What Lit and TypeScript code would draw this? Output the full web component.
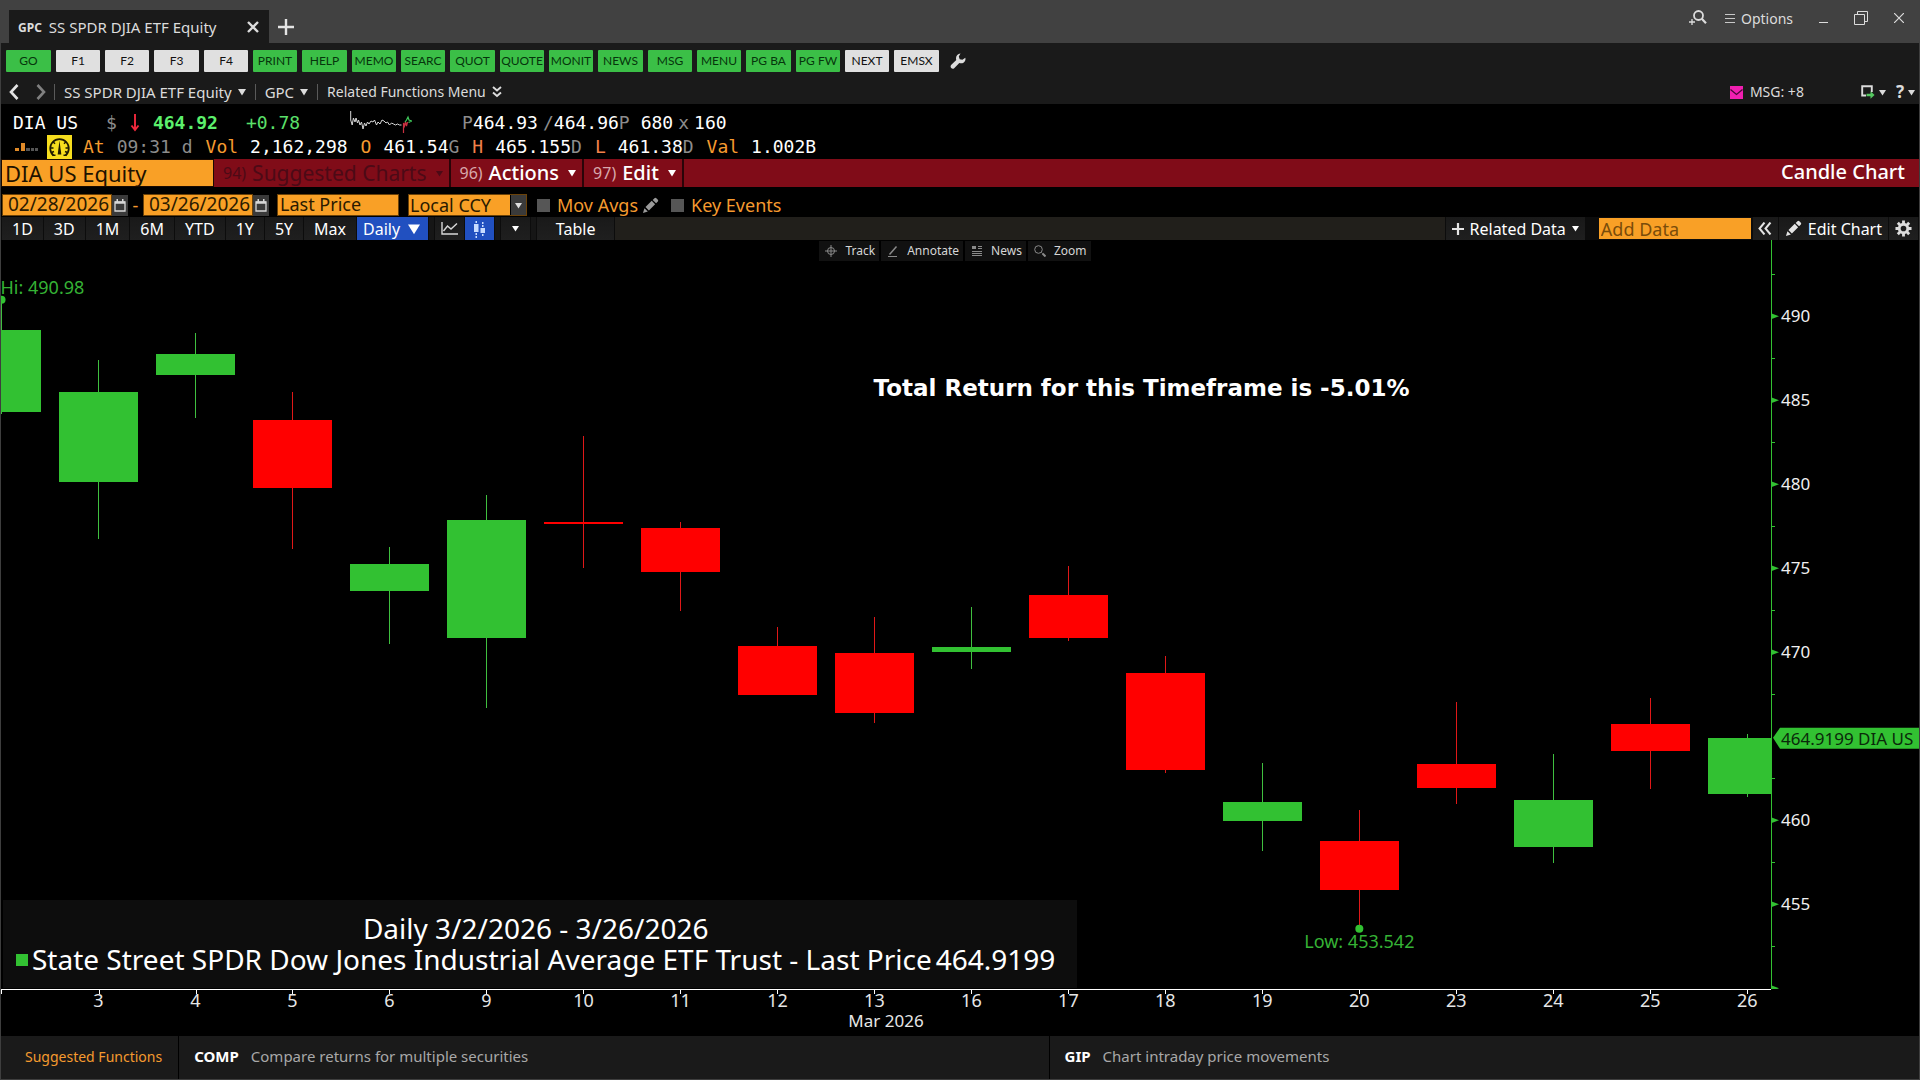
import { LitElement, html, css, svg, nothing } from 'lit';
import { customElement } from 'lit/decorators.js';
import { classMap } from 'lit/directives/class-map.js';

interface Candle {
  day: number;
  high: number;
  top: number;
  bottom: number;
  low: number;
  up: boolean;
}

const candle = (day: number, high: number, top: number, bottom: number, low: number, up: boolean): Candle => ({
  day, high, top, bottom, low, up,
});

const CANDLES: Candle[] = [
  candle(2, 490.98, 489.18, 484.3, 484.18, true),
  candle(3, 487.4, 485.49, 480.14, 476.74, true),
  candle(4, 489.01, 487.76, 486.51, 483.95, true),
  candle(5, 485.49, 483.83, 479.78, 476.15, false),
  candle(6, 476.27, 475.26, 473.65, 470.49, true),
  candle(9, 479.36, 477.88, 470.85, 466.68, true),
  candle(10, 482.88, 477.78, 477.64, 475.02, false),
  candle(11, 477.76, 477.4, 474.78, 472.46, false),
  candle(12, 471.51, 470.38, 467.46, 467.46, false),
  candle(13, 472.1, 469.96, 466.39, 465.79, false),
  candle(16, 472.7, 470.32, 470.02, 469.01, true),
  candle(17, 475.14, 473.41, 470.85, 470.67, false),
  candle(18, 469.78, 468.77, 462.99, 462.82, false),
  candle(19, 463.41, 461.09, 459.96, 458.17, true),
  candle(20, 460.61, 458.77, 455.85, 453.542, false),
  candle(23, 467.04, 463.35, 461.92, 460.97, false),
  candle(24, 463.95, 461.21, 458.41, 457.46, true),
  candle(25, 467.28, 465.73, 464.13, 461.86, false),
  candle(26, 465.155, 464.92, 461.54, 461.38, true),
];

const PRICE_TOP = 494.54;
const PRICE_BOTTOM = 449.96;
const STEP = 100 / 18.25;
const BODY = 4.46;

const yOf = (price: number) => ((PRICE_TOP - price) / (PRICE_TOP - PRICE_BOTTOM)) * 100;
const xOf = (index: number) => index * STEP + 0.03;
const pct = (n: number) => `${n.toFixed(3)}%`;

const caret = (size = 8) => html`<svg class="icon" width=${size} height=${size} viewBox="0 0 8 8"><path d="M0 1h8L4 7.5z" fill="currentColor"/></svg>`;

const pencil = (size: number, color: string) => html`<svg class="icon" width=${size} height=${size} viewBox="0 0 18 18">
  <path d="M1 17l1.600-5.200 3.600 3.600zM3.700 10.700l6.600-6.600 3.600 3.600-6.600 6.600zM11.300 3.100l1.900-1.900q1-.8 2 .1l1.600 1.600q.8 1 0 1.900l-1.900 1.900z" fill=${color}/></svg>`;

const calendar = html`<svg class="icon" width="12" height="13" viewBox="0 0 12 13">
  <path d="M1 3h10v9H1z" fill="none" stroke="#d8d8d8" stroke-width="1.300"/><path d="M1 2.500h10v2.300H1zM2.500 0h1.500v3H2.500zM8 0h1.500v3H8z" fill="#d8d8d8"/></svg>`;

const FUNCTION_KEYS: [string, string][] = [
  ['GO', 'green'], ['F1', 'white'], ['F2', 'white'], ['F3', 'white'], ['F4', 'white'],
  ['PRINT', 'green'], ['HELP', 'green'], ['MEMO', 'green'], ['SEARC', 'green'], ['QUOT', 'green'],
  ['QUOTE', 'green'], ['MONIT', 'green'], ['NEWS', 'green'], ['MSG', 'green'], ['MENU', 'green'],
  ['PG BA', 'green'], ['PG FW', 'green'], ['NEXT', 'white'], ['EMSX', 'white'],
];

const RANGES = ['1D', '3D', '1M', '6M', 'YTD', '1Y', '5Y', 'Max'];

@customElement('candle-chart')
export class CandleChart extends LitElement {
  static styles = css`
    :host {
      display: grid;
      grid-template-columns: minmax(0, 1fr) 148px;
      grid-template-rows: minmax(400px, 1fr) 47px;
      position: relative;
      background: #000;
      font-family: "Noto Sans", "Open Sans", sans-serif;
      color: #fff;
    }
    svg { display: block; width: 100%; height: 100%; }
    .plot { position: relative; overflow: hidden; }
    .plot > svg { position: absolute; inset: 0; }
    .scale { position: relative; }
    .scale > svg { position: absolute; inset: 0; }
    .dates { border-top: 1px solid #fff; box-sizing: border-box; }
    .dates svg { overflow: visible; }
    .crisp { shape-rendering: crispEdges; }
    .up { fill: #32c132; }
    .down { fill: #ff0000; }
    .up-line { stroke: #3fbf3f; }
    .down-line { stroke: #e01818; }
    .mark { fill: #35b235; font-size: 18px; }
    .note { fill: #fff; font: bold 23px "DejaVu Sans", sans-serif; }
    .price { fill: #f0f0f0; font-size: 17px; }
    .day { fill: #e6e6e6; font-size: 18px; }
    .month { fill: #e6e6e6; font-size: 17px; }
    .tag { fill: #32c132; }
    .tag-text { fill: #0a2a0a; font-size: 17px; }
    .legend {
      position: absolute;
      left: 2px;
      bottom: 1px;
      padding: 13px 22px 13px 13px;
      background: #0d0d0d;
      font-size: 28px;
      line-height: 31px;
    }
    .legend-title { text-align: center; }
    .legend-row { display: flex; align-items: center; gap: 4px; white-space: nowrap; }
    .swatch { width: 12px; height: 12px; background: #32c132; }
    .tools {
      position: absolute;
      top: 1px;
      left: 0;
      right: 0;
      padding-right: 10px;
      display: flex;
      justify-content: center;
      gap: 2px;
    }
    .tool {
      display: flex;
      align-items: center;
      gap: 8px;
      height: 20px;
      padding: 0 4px 0 6px;
      border: 0;
      background: #111;
      color: #d6d6d6;
      font: 12px/20px "Noto Sans", sans-serif;
    }
    .tool svg { width: 12px; height: 12px; }
  `;

  private renderCandle(c: Candle, i: number) {
    const x = xOf(i);
    const tone = c.up ? 'up' : 'down';
    return svg`<g class="crisp">
      <line class="${tone}-line" x1=${pct(x)} x2=${pct(x)} y1=${pct(yOf(c.high))} y2=${pct(yOf(c.low))}/>
      <rect class=${tone} x=${pct(x - BODY / 2)} width=${pct(BODY)} y=${pct(yOf(c.top))} height=${pct(yOf(c.bottom) - yOf(c.top))}/>
    </g>`;
  }

  render() {
    const majors = [490, 485, 480, 475, 470, 465, 460, 455, 450];
    const minors = [492.5, 487.5, 482.5, 477.5, 472.5, 467.5, 462.5, 457.5, 452.5];
    const hi = CANDLES[0];
    const low = CANDLES[14];
    return html`
      <div class="plot">
        <svg role="img" aria-label="Daily candles for DIA US">
          ${CANDLES.map((c, i) => this.renderCandle(c, i))}
          <svg x=${pct(xOf(0))} y=${pct(yOf(hi.high))} overflow="visible">
            <circle class="up" r="4"/><text class="mark" x="-1" y="-6">Hi: 490.98</text>
          </svg>
          <svg x=${pct(xOf(14))} y=${pct(yOf(low.low))} overflow="visible">
            <circle class="up" r="4"/><text class="mark" y="19" text-anchor="middle">Low: 453.542</text>
          </svg>
          <text class="note" x="49.300%" y="20.800%">Total Return for this Timeframe is -5.01%</text>
        </svg>
        <div class="legend">
          <div class="legend-title">Daily 3/2/2026 - 3/26/2026</div>
          <div class="legend-row">
            <span class="swatch"></span>
            <span>State Street SPDR Dow Jones Industrial Average ETF Trust - Last Price</span>
            <span>464.9199</span>
          </div>
        </div>
      </div>
      <div class="scale">
        <svg>
          <rect class="up crisp" width="1" height="100%"/>
          ${minors.map((p) => svg`<rect class="up crisp" width="4" height="1" y=${pct(yOf(p))}/>`)}
          ${majors.map((p) => svg`<svg y=${pct(yOf(p))} overflow="visible">
            ${p === 465 ? nothing : svg`<path class="up" d="M0 -3L8 0L0 3z"/>`}
            ${p === 465 || p === 450 ? nothing : svg`<text class="price" x="10" y="6">${p}</text>`}
          </svg>`)}
          <svg y=${pct(yOf(464.9199))} overflow="visible">
            <path class="tag" d="M2 0L9 -10H148V11H9z"/>
            <text class="tag-text" x="10" y="7">464.9199 DIA US</text>
          </svg>
        </svg>
      </div>
      <div class="dates">
        <svg>
          <rect width="1" height="4" fill="#fff"/>
          ${CANDLES.slice(1).map((c, i) => svg`<svg x=${pct(xOf(i + 1))} overflow="visible">
            <rect class="crisp" width="1" height="4" fill="#fff"/>
            <text class="day" y="17" text-anchor="middle">${c.day}</text>
          </svg>`)}
          <text class="month" x="50%" y="37" text-anchor="middle">Mar 2026</text>
        </svg>
      </div>
      <div class="tools">
        <button class="tool"><svg viewBox="0 0 12 12" fill="none" stroke="#8a8a8a"><path d="M6 0v12M0 6h12"/><circle cx="6" cy="6" r="3.500"/></svg>Track</button>
        <button class="tool"><svg viewBox="0 0 12 12" fill="none" stroke="#8a8a8a"><path d="M2.500 9.500L9.500 1.500" stroke-width="1.500"/><path d="M1 11.500h9"/></svg>Annotate</button>
        <button class="tool"><svg viewBox="0 0 12 12" fill="none" stroke="#8a8a8a"><path d="M1 1.500h4M1 3.500h4M7 1.500h4M7 3.500h4M1 6.500h10M1 8.500h10M1 10.500h10"/><path d="M3 1v3" stroke-width="4"/></svg>News</button>
        <button class="tool"><svg viewBox="0 0 12 12" fill="none" stroke="#8a8a8a"><circle cx="4.500" cy="4.500" r="3.800"/><path d="M7.500 7.500l1 1"/><path d="M8.500 8.500l3 3" stroke-width="2"/></svg>Zoom</button>
      </div>
    `;
  }
}

@customElement('app-root')
export class AppRoot extends LitElement {
  static styles = css`
    :host { display: block; font-family: "Noto Sans", "Open Sans", sans-serif; }
    * { box-sizing: border-box; }
    button { border: 0; margin: 0; padding: 0; background: none; color: inherit; font: inherit; white-space: nowrap; }
    input, select { margin: 0; border: 0; border-radius: 0; outline: 0; font: inherit; }
    .icon { display: block; flex: none; }
    .page { display: flex; flex-direction: column; min-height: 100vh; background: #000; color: #dcdcdc; }

    .titlebar { display: flex; height: 43px; background: #414141; }
    .tab { display: flex; align-items: center; width: 260px; height: 33px; margin: 10px 0 0 9px; padding: 0 10px 0 9px; background: #1a1a1a; font-size: 15px; }
    .tab-code { font-size: 12px; font-weight: bold; margin-right: 7px; padding-top: 2px; }
    .tab-title { flex: 1; white-space: nowrap; }
    .new-tab { margin: 11px 0 0 9px; }
    .window { display: flex; align-items: center; height: 36px; margin-left: auto; padding-right: 16px; gap: 26px; font-size: 14px; }
    .window-options { display: flex; align-items: center; gap: 6px; }
    .window-tools { display: flex; align-items: center; gap: 18px; }

    .frame { flex: 1; display: flex; flex-direction: column; border: solid #3e3e3e; border-width: 0 1px 1px; }
    .keys { display: flex; align-items: center; gap: 5px; padding: 7px 5px 8px; background: #1a1a1a; }
    .key { width: 44px; height: 22px; border-radius: 1px; font: 12px/22px Lato, sans-serif; text-align: center; }
    .key:nth-child(3n + 1) { width: 45px; }
    .key.green { background: #3bbf47; color: #06350c; }
    .key.white { background: #e0e0e0; color: #111; }
    .wrench { margin-left: 6px; }

    .nav { display: flex; align-items: center; height: 24px; padding: 0 4px 0 8px; background: #1a1a1a; font-size: 15px; line-height: 24px; }
    .nav-arrows { display: flex; gap: 17px; padding-right: 8px; }
    .nav-item { display: flex; align-items: center; gap: 6px; height: 16px; padding: 0 9px; border-left: 1px solid #5a5a5a; }
    .nav-item.menu { font-size: 14px; }
    .nav-right { display: flex; align-items: center; margin-left: auto; gap: 10px; }
    .message { display: flex; align-items: center; gap: 7px; font-size: 14px; margin-right: 47px; }
    .drop { display: flex; align-items: center; gap: 4px; font-size: 17px; font-weight: bold; }

    .quote { padding: 7px 0 0 12px; font: 18px/24px "DejaVu Sans Mono", monospace; color: #fff; white-space: nowrap; }
    .quote-row { display: flex; align-items: center; height: 24px; }
    .dim { color: #8c8c8c; }
    .bright { color: #5cf06c; font-weight: bold; }
    .gain { color: #5be06b; }
    .g1 { margin-left: 5px; }
    .g2 { margin-left: 11px; }
    .g3 { margin-left: 28px; }
    .g4 { margin-left: 50px; }
    .stats { display: flex; gap: 13px; margin-left: 11px; }
    .stat { display: flex; gap: 12px; }
    .label { color: #f59a2f; }
    .label.hot { color: #f2814a; }

    .red { display: flex; align-items: stretch; height: 28px; background: #800c18; font-size: 21px; line-height: 28px; }
    .security { width: 213px; padding: 0 3px; border: 1px solid #1a0a00; background: #f9a026; color: #1e1200; font-size: 22px; }
    .menu-button { display: flex; align-items: center; gap: 6px; padding: 0 6px 0 9px; border-right: 2px solid #2a0408; color: #fff; font-size: 20px; font-weight: 500; line-height: 26px; }
    .menu-button .num { font-size: 16px; font-weight: 400; color: #d8a8ac; }
    .menu-button .icon { margin-left: 3px; }
    .menu-button.off { color: #4c0a16; font-size: 21px; font-weight: 400; }
    .menu-button.off .num { color: #4c0a16; }
    .heading { margin: 0 14px 0 auto; color: #fff; font-size: 20px; font-weight: 500; line-height: 26px; }

    .controls { display: flex; align-items: center; height: 30px; padding: 6px 0 0 1px; color: #f59a2f; font-size: 18px; }
    .field { height: 22px; padding: 0 2px 2px; border: 1px solid #6b4208; background: #f9a026; color: #2a1a00; font-size: 18px; line-height: 20px; }
    .field.date { width: 110px; padding-left: 5px; font-size: 19px; }
    .field.price { width: 122px; margin: 0 9px 0 8px; }
    .cal { display: flex; align-items: center; justify-content: center; width: 16px; height: 21px; background: #3a3a3a; }
    .dash { width: 15px; text-align: center; }
    .combo { display: grid; grid-template-columns: 102px 17px; color: #ddd; }
    .combo select { grid-area: 1 / 1 / 2 / 3; width: 119px; appearance: none; padding: 0 1px; background: linear-gradient(90deg, #f9a026 101px, #000 101px, #000 102px, #3a3a3a 102px); }
    .combo span { grid-area: 1 / 2; display: grid; place-items: center; pointer-events: none; }
    .check { display: flex; align-items: center; gap: 7px; margin-left: 10px; line-height: 22px; }
    .check input { appearance: none; width: 13px; height: 13px; background: #565656; }
    .pen { margin: 0 2px 0 4px; }

    .toolbar { display: flex; align-items: stretch; height: 23px; background: #211f1b; color: #fff; font-size: 16px; line-height: 22px; }
    .group { display: flex; gap: 1px; padding: 0 1px; background: #0c0c0c; }
    .tb { display: flex; align-items: center; justify-content: center; gap: 6px; padding: 0 10px; background: linear-gradient(#191919, #1f1f1f); }
    .tb.on { background: #2150c0; }
    .tb.daily { padding: 0 8px 0 6px; gap: 8px; }
    .tb.square { width: 29px; padding: 0; }
    .tb.narrow { width: 25px; padding: 0; }
    .tb.table { width: 77px; }
    .gap { width: 5px; background: #161616; }
    .related { margin-left: auto; }
    .tb.wide { padding: 0 6px; }
    .add { width: 152px; height: 21px; margin: 1px 1px 0 13px; padding: 0 2px; background: #f9a026; color: #2a1a00; font-size: 18px; }
    .add::placeholder { color: #7a4c0a; opacity: 1; }

    candle-chart { flex: 1; }

    .footer { display: grid; grid-template-columns: auto 1fr 1fr; gap: 1px; height: 43px; background: #000; font-size: 15px; line-height: 41px; color: #a8a8a8; }
    .cell { display: flex; gap: 12px; padding: 0 15px; background: #1a1a1a; }
    .cell a { color: inherit; text-decoration: none; }
    .cell.first { padding: 0 16px 0 24px; color: #f59a2f; font-size: 14px; }
    .cell b { color: #fff; }
  `;

  private renderTitleBar() {
    return html`<header class="titlebar">
      <div class="tab">
        <span class="tab-code">GPC</span><span class="tab-title">SS SPDR DJIA ETF Equity</span>
        <button aria-label="Close tab"><svg class="icon" width="12" height="12" viewBox="0 0 12 12"><path d="M1 1l10 10M11 1L1 11" stroke="#dcdcdc" stroke-width="2.400"/></svg></button>
      </div>
      <button class="new-tab" aria-label="New tab"><svg class="icon" width="16" height="16" viewBox="0 0 16 16"><path d="M8 0v16M0 8h16" stroke="#e4e4e4" stroke-width="2.400"/></svg></button>
      <div class="window">
        <div class="window-tools">
          <button aria-label="Search"><svg class="icon" width="19" height="18" viewBox="0 0 19 18" fill="none" stroke="#dcdcdc"><circle cx="10.500" cy="6.500" r="4.500" stroke-width="1.800"/><path d="M13.800 9.800l4.200 4.400" stroke-width="2.200"/><path d="M4 10v6M1 13h6" stroke-width="1.300"/></svg></button>
          <button class="window-options"><svg class="icon" width="10" height="11" viewBox="0 0 10 11"><path d="M0 1.500h10M0 5.500h10M0 9.500h10" stroke="#c8c8c8"/></svg>Options</button>
        </div>
        <button aria-label="Minimize"><svg class="icon" width="9" height="12" viewBox="0 0 9 12"><path d="M0 10.500h9" stroke="#dcdcdc"/></svg></button>
        <button aria-label="Restore"><svg class="icon" width="14" height="14" viewBox="0 0 14 14" fill="none" stroke="#dcdcdc"><path d="M.5 3.500h10v10H.5zM3.500 3.500V.5h10v10h-3"/></svg></button>
        <button aria-label="Close"><svg class="icon" width="10" height="10" viewBox="0 0 10 10"><path d="M0 0l10 10M10 0L0 10" stroke="#dcdcdc" stroke-width="1.200"/></svg></button>
      </div>
    </header>`;
  }

  private renderKeys() {
    return html`<div class="keys">
      ${FUNCTION_KEYS.map(([label, tone]) => html`<button class=${classMap({ key: true, [tone]: true })}>${label}</button>`)}
      <button class="wrench" aria-label="Settings"><svg class="icon" width="16" height="16" viewBox="0 0 16 16"><path d="M10.500 .6L8.800 3.600l.9 2.600 2.700.6 2.900-2.100Q16.100 8 13.500 9.700 11.700 10.800 9.300 10L4.200 15.200Q2.600 16.300 1.200 15 0 13.500 1.100 12L6.300 7Q5.400 4.200 7.200 2.100 8.700 .5 10.500 .6z" fill="#dcdcdc"/></svg></button>
    </div>`;
  }

  private renderNav() {
    return html`<nav class="nav">
      <div class="nav-arrows">
        <button aria-label="Back"><svg class="icon" width="10" height="16" viewBox="0 0 10 16"><path d="M8.500 1L2 8l6.500 7" fill="none" stroke="#e4e4e4" stroke-width="2.600"/></svg></button>
        <button aria-label="Forward"><svg class="icon" width="10" height="16" viewBox="0 0 10 16"><path d="M1.500 1L8 8l-6.500 7" fill="none" stroke="#808080" stroke-width="2.600"/></svg></button>
      </div>
      <button class="nav-item">SS SPDR DJIA ETF Equity ${caret()}</button>
      <button class="nav-item">GPC ${caret()}</button>
      <button class="nav-item menu">Related Functions Menu<svg class="icon" width="10" height="12" viewBox="0 0 10 12"><path d="M1 1l4 3.500L9 1M1 6.500L5 10l4-3.500" fill="none" stroke="#dcdcdc" stroke-width="1.900"/></svg></button>
      <div class="nav-right">
        <button class="message"><svg class="icon" width="13" height="13" viewBox="0 0 13 13"><path d="M0 0h13v13H0z" fill="#f01fb0"/><path d="M.5 3.500l6 5 6-5" fill="none" stroke="#4a0838" stroke-width="1.300"/></svg>MSG: +8</button>
        <button class="drop" aria-label="Export"><svg class="icon" width="14" height="14" viewBox="0 0 14 14"><path d="M5 10.500H1.200V1.200h9.600V7" fill="none" stroke="#dcdcdc" stroke-width="1.900"/><path d="M5.500 8.800h4V6.200L13.600 10l-4.100 3.700v-2.500h-4z" fill="#55c860"/></svg>${caret(7)}</button>
        <button class="drop">? ${caret(7)}</button>
      </div>
    </nav>`;
  }

  private stat(label: string, value: string, suffix = '', hot = false) {
    return html`<span class="stat"><span class=${classMap({ label: true, hot })}>${label}</span><span>${value}${suffix ? html`<span class="dim">${suffix}</span>` : nothing}</span></span>`;
  }

  private renderQuote() {
    return html`<section class="quote">
      <div class="quote-row"><span>DIA US</span><span class="dim g3">$</span><svg class="icon g2" width="14" height="20" viewBox="0 0 14 20"><path d="M7 1v15M3.500 12.500L7 17l3.500-4.500" fill="none" stroke="#f0283c" stroke-width="1.900"/></svg><span class="bright g2">464.92</span><span class="gain g3">+0.78</span><svg class="icon g4" width="62" height="24" viewBox="0 0 62 24" fill="none"><path d="M.7 0v9l1.500 5 1.200-7 1.600 4 1-4 1.500 5 1-3 1.500 5 1.500-3 1.500 7 1.500-6 1.500 3 1.500-4 1.500 2 2-3 2 1 1.500-2 2 5 1.500-3 2 2 2-4 2 1 2 2 1.500-1 2 3 2-2 2 1 2 1 2-1 2 1h2" stroke="#d8d8d8"/><path d="M53.500 22V12l1 3 1-4 1 4 1-4" stroke="#c83040" stroke-width="1.200"/><path d="M55 11l1.500-2 1.500-3 1 3 2.500 1-3 1.500" stroke="#3fc85a" stroke-width="1.200"/></svg><span class="g4"><span class="dim">P</span>464.93</span><span class="dim g1">/</span><span>464.96<span class="dim">P</span></span><span class="g2">680</span><span class="dim g1">x</span><span class="g1">160</span></div>
      <div class="quote-row"><svg class="icon" width="34" height="10" viewBox="-2 0 34 10"><path d="M0 6h4v3H0zM6 1h4v8H6z" fill="#e08a28"/><path d="M11 6h4v3h-4zM16 6h3v3h-3zM20 6h3v3h-3z" fill="#555"/></svg><svg class="icon" width="25" height="25" viewBox="0 0 25 25"><path d="M0 0h25v25H0z" fill="#f7de1e"/><path d="M6.500 20.500A9.300 9.300 0 1 1 18.500 20.500" fill="none" stroke="#1e1a00" stroke-width="1.700"/><path d="M12.500 5.500l1.800 14h-3.600z" fill="#1e1a00"/><path d="M3.500 13h3M18.500 13h3M6 6.800l2 2M19 6.800l-2 2M4.500 17.500l2.500-1M20.500 17.500l-2.500-1M5.500 20.300h3M16.500 20.300h3" stroke="#1e1a00" stroke-width="1.500"/></svg><div class="stats"><span class="stat"><span class="label">At</span><span class="dim">09:31 d</span></span>${this.stat('Vol', '2,162,298')}${this.stat('O', '461.54', 'G')}${this.stat('H', '465.155', 'D', true)}${this.stat('L', '461.38', 'D', true)}${this.stat('Val', '1.002B')}</div></div>
    </section>`;
  }

  private renderControls() {
    return html`
      <div class="red">
        <input class="security" aria-label="Security" value="DIA US Equity">
        <button class="menu-button off" disabled><span class="num">94)</span>Suggested Charts ${caret(7)}</button>
        <button class="menu-button"><span class="num">96)</span>Actions ${caret(8)}</button>
        <button class="menu-button"><span class="num">97)</span>Edit ${caret(8)}</button>
        <h1 class="heading">Candle Chart</h1>
      </div>
      <div class="controls">
        <input class="field date" aria-label="Start date" value="02/28/2026"><button class="cal" aria-label="Pick start date">${calendar}</button>
        <span class="dash">-</span>
        <input class="field date" aria-label="End date" value="03/26/2026"><button class="cal" aria-label="Pick end date">${calendar}</button>
        <input class="field price" aria-label="Price field" value="Last Price">
        <div class="combo"><select class="field" aria-label="Currency"><option>Local CCY</option></select><span>${caret(7)}</span></div>
        <label class="check"><input type="checkbox">Mov Avgs</label>
        <button class="pen" aria-label="Edit moving averages">${pencil(17, '#9a9a9a')}</button>
        <label class="check"><input type="checkbox">Key Events</label>
      </div>`;
  }

  private renderToolbar() {
    return html`<div class="toolbar">
      <div class="group">
        ${RANGES.map((r) => html`<button class="tb">${r}</button>`)}
        <button class="tb on daily">Daily ${caret(12)}</button>
        <span class="gap"></span>
        <button class="tb square" aria-label="Line chart"><svg class="icon" width="17" height="13" viewBox="0 0 17 13" fill="none" stroke="#d8d8d8" stroke-width="1.400"><path d="M1 0v12h16M2.500 9L6.500 4l3.500 3L16 1.500"/></svg></button>
        <button class="tb square on" aria-label="Candle chart"><svg class="icon" width="13" height="18" viewBox="0 0 13 18" fill="#c8dcff"><path d="M2.500 1h1.500v2H2.500zM1 4h4.500v8H1zM2.500 13h1.500v2H2.500zM2.500 16h1.500v2H2.500zM9 2h1.500v2H9zM9 5h1.500v2H9zM7.500 8H12v5H7.500zM9 14h1.500v2H9z"/></svg></button>
        <span class="gap"></span>
        <button class="tb square" aria-label="More chart types">${caret(7)}</button>
        <span class="gap"></span>
        <button class="tb table">Table</button>
      </div>
      <div class="group related">
        <button class="tb wide"><svg class="icon" width="12" height="12" viewBox="0 0 12 12"><path d="M6 0v12M0 6h12" stroke="#e4e4e4" stroke-width="2.200"/></svg>Related Data ${caret(7)}</button>
        <input class="add" aria-label="Add Data" placeholder="Add Data">
        <button class="tb narrow" aria-label="Collapse"><svg class="icon" width="14" height="13" viewBox="0 0 14 13"><path d="M6.500 .5L1.500 6.500l5 6M12.500 .5l-5 6 5 6" fill="none" stroke="#e4e4e4" stroke-width="2"/></svg></button>
        <button class="tb wide">${pencil(17, '#e4e4e4')}Edit Chart</button>
        <button class="tb square" aria-label="Chart settings"><svg class="icon" width="17" height="17" viewBox="-9 -9 18 18"><circle r="4.500" fill="none" stroke="#dcdcdc" stroke-width="3"/><path d="M0-8.500V-5M0 8.500V5M-8.500 0H-5M8.500 0H5M-6-6l2.500 2.500M6 6L3.500 3.500M-6 6l2.500-2.500M6-6L3.500-3.500" stroke="#dcdcdc" stroke-width="3"/></svg></button>
      </div>
    </div>`;
  }

  render() {
    return html`<div class="page">
      ${this.renderTitleBar()}
      <main class="frame">
        ${this.renderKeys()}
        ${this.renderNav()}
        ${this.renderQuote()}
        ${this.renderControls()}
        ${this.renderToolbar()}
        <candle-chart></candle-chart>
        <footer class="footer">
          <div class="cell first">Suggested Functions</div>
          <div class="cell"><b>COMP</b><a href="#comp">Compare returns for multiple securities</a></div>
          <div class="cell"><b>GIP</b><a href="#gip">Chart intraday price movements</a></div>
        </footer>
      </main>
    </div>`;
  }
}
